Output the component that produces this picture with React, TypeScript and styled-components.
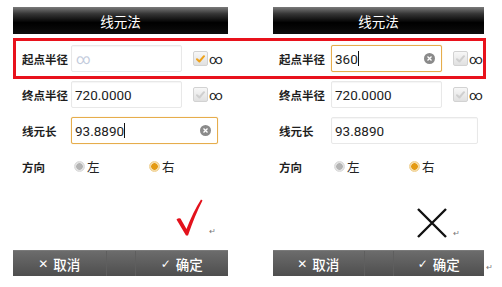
import styled, { createGlobalStyle } from 'styled-components';

const GlobalStyle = createGlobalStyle`
  body {
    margin: 0;
    background: #fff;
    font-family: Roboto, 'Noto Sans CJK SC', sans-serif;
  }
`;

const Page = styled.div`
  position: relative;
  width: 502px;
  height: 287px;
  display: flex;
  gap: 45px;
  padding: 7px 0 0 13px;
  box-sizing: border-box;
  overflow: hidden;
`;

const Panel = styled.div<{ $w: number }>`
  width: ${(p) => p.$w}px;
  height: 269px;
  display: flex;
  flex-direction: column;
`;

const Header = styled.div`
  height: 27px;
  display: flex;
  align-items: center;
  justify-content: center;
  color: #fff;
  font-size: 13.5px;
  font-family: 'Noto Sans CJK SC', sans-serif;
  background: linear-gradient(to bottom, #7a7a7a 0%, #363636 25%, #000 58%, #0d0d0d 100%);
`;

const Form = styled.div<{ $inset: number }>`
  display: flex;
  flex-direction: column;
  gap: 9px;
  padding: 11px 0 0 ${(p) => p.$inset}px;
`;

const Row = styled.div`
  height: 27px;
  display: flex;
  align-items: center;
`;

const Label = styled.div<{ $w: number }>`
  width: ${(p) => p.$w}px;
  font-family: 'Noto Sans CJK SC', sans-serif;
  font-weight: 700;
  font-size: 11.5px;
  color: #1e1e1e;
`;

const Field = styled.div<{ $w: number; $focus?: boolean }>`
  width: ${(p) => p.$w}px;
  height: 27px;
  box-sizing: border-box;
  display: flex;
  align-items: center;
  padding: 0 6px 0 3px;
  border: 1px solid ${(p) => (p.$focus ? '#e6ad4c' : '#e8e8e8')};
  border-radius: 2px;
  background: #fff;
  box-shadow: ${(p) => (p.$focus ? '0 0 1px #f0c070' : 'inset 0 1px 1px rgba(0,0,0,0.04)')};
`;

const Value = styled.span`
  font-size: 13.5px;
  color: #222;
`;

const Hint = styled.span`
  font-size: 14px;
  color: #c3cbdc;
  margin-left: 1px;
`;

const Caret = styled.span`
  width: 1px;
  height: 15px;
  background: #111;
`;

const Clear = styled.span`
  margin-left: auto;
  width: 11px;
  height: 11px;
  border-radius: 50%;
  background: #8a8a8a;
  display: flex;
  align-items: center;
  justify-content: center;
`;

const Check = styled.span`
  margin-left: 11px;
  width: 15px;
  height: 15px;
  box-sizing: border-box;
  border: 1px solid #d2d2d2;
  border-radius: 2px;
  background: linear-gradient(to bottom, #f7f7f7, #e0e0e0);
  display: flex;
  align-items: center;
  justify-content: center;
`;

const Inf = styled.span`
  font-size: 13.5px;
  color: #1a1a1a;
  margin-left: 1px;
`;

const Choice = styled.div<{ $w: number }>`
  width: ${(p) => p.$w}px;
  display: flex;
  align-items: center;
  gap: 2px;
  font-family: 'Noto Sans CJK SC', sans-serif;
  font-size: 12.5px;
  color: #222;
`;

const Dot = styled.span<{ $on?: boolean }>`
  width: 9px;
  height: 9px;
  border-radius: 50%;
  background: ${(p) =>
    p.$on
      ? 'radial-gradient(circle, #e49a12 0 3px, #f6dca8 3.5px)'
      : 'radial-gradient(circle, #b4b4b4 0 3px, #e2e2e2 3.5px)'};
  border: 1px solid ${(p) => (p.$on ? '#f0d090' : '#dadada')};
`;

const MarkArea = styled.div<{ $right: number; $bottom: number }>`
  flex: 1;
  display: flex;
  justify-content: flex-end;
  align-items: flex-end;
  gap: 6px;
  padding: 0 ${(p) => p.$right}px ${(p) => p.$bottom}px 0;
`;

const Para = styled.span`
  font-size: 8px;
  line-height: 8px;
  color: #777;
  font-family: 'DejaVu Sans', sans-serif;
`;

const BarWrap = styled.div`
  position: relative;
`;

const Bar = styled.div`
  height: 26px;
  display: grid;
  grid-template-columns: 1fr 30px 1fr;
  background: linear-gradient(to bottom, #6c6c6c, #4e4e4e);
  border-top: 1px solid #7a7a7a;
  box-sizing: border-box;
`;

const BarCell = styled.div<{ $gap?: boolean }>`
  display: flex;
  align-items: center;
  justify-content: center;
  gap: 5px;
  color: #fff;
  font-family: 'Noto Sans CJK SC', sans-serif;
  font-size: 13.5px;
  font-weight: 500;
  border-left: ${(p) => (p.$gap ? '1px solid #5e5e5e' : 'none')};
  border-right: ${(p) => (p.$gap ? '1px solid #5e5e5e' : 'none')};
`;

const BarIcon = styled.span`
  font-size: 12px;
  font-weight: 700;
  font-family: 'DejaVu Sans', sans-serif;
`;

const Tail = styled(Para)`
  position: absolute;
  right: -9px;
  bottom: 4px;
`;

const Highlight = styled.div`
  position: absolute;
  left: 13px;
  top: 38px;
  width: 473px;
  height: 41px;
  box-sizing: border-box;
  border: 3px solid #e8121c;
`;

const Tick = ({ color }: { color: string }) => (
  <svg width="9" height="8" viewBox="0 0 9 8">
    <path d="M1 4.2 L3.4 6.5 L8 1.2" fill="none" stroke={color} strokeWidth="2" strokeLinecap="round" strokeLinejoin="round" />
  </svg>
);

const ClearIcon = () => (
  <Clear>
    <svg width="5" height="5" viewBox="0 0 5 5">
      <path d="M0.5 0.5 L4.5 4.5 M4.5 0.5 L0.5 4.5" stroke="#fff" strokeWidth="1.3" />
    </svg>
  </Clear>
);

const RedCheck = () => (
  <svg width="27" height="37" viewBox="0 0 27 37">
    <path
      d="M0.5 20.5 Q2.5 18.5 4.5 19.5 L10.5 30 Q17 13 25 0.5 L26.5 1.5 Q19 16 12 36.5 L10 36.5 Z"
      fill="#e3121c"
    />
  </svg>
);

const Cross = () => (
  <svg width="30" height="30" viewBox="0 0 30 30">
    <path d="M1 1 L29 29 M29 1 L1 29" stroke="#111" strokeWidth="2.4" />
  </svg>
);

type PanelProps = {
  width: number;
  inset: number;
  first: 'hint' | 'typing';
  lengthFocused: boolean;
  mark: 'ok' | 'bad';
};

const SurveyPanel = ({ width, inset, first, lengthFocused, mark }: PanelProps) => {
  const labelW = 58 - inset;
  return (
    <Panel $w={width}>
      <Header>线元法</Header>
      <Form $inset={inset}>
        <Row>
          <Label $w={labelW}>起点半径</Label>
          {first === 'hint' ? (
            <Field $w={111}>
              <Hint>∞</Hint>
            </Field>
          ) : (
            <Field $w={111} $focus>
              <Value>360</Value>
              <Caret />
              <ClearIcon />
            </Field>
          )}
          <Check>
            <Tick color={first === 'hint' ? '#eea21c' : '#cfcfcf'} />
          </Check>
          <Inf>∞</Inf>
        </Row>
        <Row>
          <Label $w={labelW}>终点半径</Label>
          <Field $w={111}>
            <Value>720.0000</Value>
          </Field>
          <Check>
            <Tick color="#cfcfcf" />
          </Check>
          <Inf>∞</Inf>
        </Row>
        <Row>
          <Label $w={labelW}>线元长</Label>
          <Field $w={147} $focus={lengthFocused}>
            <Value>93.8890</Value>
            {lengthFocused && <Caret />}
            {lengthFocused && <ClearIcon />}
          </Field>
        </Row>
        <Row>
          <Label $w={labelW + 3}>方向</Label>
          <Choice $w={75}>
            <Dot />左
          </Choice>
          <Choice $w={60}>
            <Dot $on />右
          </Choice>
        </Row>
      </Form>
      {mark === 'ok' ? (
        <MarkArea $right={12} $bottom={14}>
          <RedCheck />
          <Para>↵</Para>
        </MarkArea>
      ) : (
        <MarkArea $right={24} $bottom={12}>
          <Cross />
          <Para>↵</Para>
        </MarkArea>
      )}
      <BarWrap>
        <Bar>
          <BarCell>
            <BarIcon>✕</BarIcon>取消
          </BarCell>
          <BarCell $gap />
          <BarCell>
            <BarIcon>✓</BarIcon>确定
          </BarCell>
        </Bar>
        {mark === 'bad' && <Tail>↵</Tail>}
      </BarWrap>
    </Panel>
  );
};

const App = () => (
  <>
    <GlobalStyle />
    <Page>
      <SurveyPanel width={215} inset={9} first="hint" lengthFocused mark="ok" />
      <SurveyPanel width={211} inset={6} first="typing" lengthFocused={false} mark="bad" />
      <Highlight />
    </Page>
  </>
);

export default App;
